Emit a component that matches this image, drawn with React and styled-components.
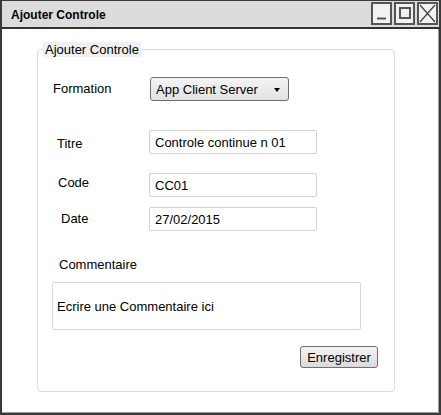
import React from 'react'
import styled, { createGlobalStyle } from 'styled-components'

const GlobalStyle = createGlobalStyle`
  html, body {
    margin: 0;
    padding: 0;
    background: #fff;
  }

  body {
    font-family: "Liberation Sans", Arial, sans-serif;
    font-size: 13px;
    color: #000;
  }
`

const Window = styled.div`
  box-sizing: border-box;
  width: 441px;
  height: 415px;
  display: flex;
  flex-direction: column;
  border: 2px solid #3a3a3a;
  border-top-width: 1px;
  background: #fff;
  box-shadow: inset -1px -1px 0 #9a9a9a;
`

const TitleBar = styled.div`
  display: flex;
  align-items: flex-start;
  height: 28px;
  padding-top: 1px;
  box-sizing: border-box;
  border-bottom: 2px solid #333;
  background: #dcdcdc;
`

const Title = styled.div`
  flex: 1;
  padding: 6px 0 0 9px;
  font-size: 12px;
  font-weight: bold;
  line-height: 14px;
`

const WinButtons = styled.div`
  display: flex;
  gap: 2px;
  margin-right: 1px;
`

const WinButton = styled.div`
  width: 21px;
  height: 23px;
  box-sizing: border-box;
  border: 2px solid #555;
  background: #f2f2f2;

  svg {
    display: block;
  }
`

const Body = styled.div`
  flex: 1;
  padding: 13px 0 0 35px;
`

const Group = styled.fieldset`
  box-sizing: border-box;
  width: 358px;
  margin: 0;
  padding: 0 16px 23px 0;
  border: 1px solid #d4dde6;
  border-radius: 4px;
`

const Legend = styled.legend`
  margin-left: 5px;
  padding: 0 2px;
  line-height: 15px;
  background: #f0f0f0;
`

const Row = styled.div`
  display: flex;
  align-items: flex-start;
  height: 24px;
  margin-top: ${({ top }) => top}px;
  padding-left: 15px;
`

const Label = styled.div`
  box-sizing: border-box;
  width: 96px;
  padding-top: ${({ dy }) => dy}px;
  padding-left: ${({ dx }) => dx}px;
  line-height: 15px;
`

const Select = styled.div`
  box-sizing: border-box;
  display: flex;
  align-items: center;
  justify-content: space-between;
  width: 139px;
  height: 24px;
  margin-left: 1px;
  padding: 1px 8px 0 5px;
  border: 1px solid #707070;
  border-radius: 3px;
  background: linear-gradient(#f4f4f4, #e2e2e2);
`

const Arrow = styled.span`
  width: 0;
  height: 0;
  border-left: 3px solid transparent;
  border-right: 3px solid transparent;
  border-top: 4px solid #000;
`

const TextInput = styled.input`
  box-sizing: border-box;
  width: 168px;
  height: 24px;
  margin: 0;
  padding: 1px 5px 0;
  border: 1px solid #d2d2d2;
  border-radius: 2px;
  font: inherit;
  color: #000;
  background: #fff;
  outline: none;
`

const FieldTitle = styled.div`
  margin-top: 26px;
  padding-left: 21px;
  line-height: 15px;
`

const Comment = styled.textarea`
  display: block;
  box-sizing: border-box;
  width: 309px;
  height: 48px;
  margin: 10px 0 0 14px;
  padding: 16px 4px 0;
  border: 1px solid #d6d9dc;
  border-radius: 2px;
  font: inherit;
  line-height: 15px;
  color: #000;
  resize: none;
  overflow: hidden;
  outline: none;
`

const Actions = styled.div`
  display: flex;
  justify-content: flex-end;
  margin-top: 16px;
`

const Button = styled.button`
  box-sizing: border-box;
  height: 22px;
  width: 78px;
  padding: 1px 0 0;
  border: 1px solid #707070;
  border-radius: 3px;
  font: inherit;
  color: #000;
  background: linear-gradient(#f4f4f4, #dadada);
`

const fields = [
  { label: 'Titre', value: 'Controle continue n 01', top: 29, dx: 4, dy: 6 },
  { label: 'Code', value: 'CC01', top: 19, dx: 5, dy: 2 },
  { label: 'Date', value: '27/02/2015', top: 10, dx: 8, dy: 4 }
]

function App () {
  return (
    <>
      <GlobalStyle />
      <Window>
        <TitleBar>
          <Title>Ajouter Controle</Title>
          <WinButtons>
            <WinButton>
              <svg width='17' height='19' viewBox='0 0 17 19'>
                <line x1='4' y1='14.5' x2='13' y2='14.5' stroke='#555' strokeWidth='2' />
              </svg>
            </WinButton>
            <WinButton>
              <svg width='17' height='19' viewBox='0 0 17 19'>
                <rect x='4' y='4' width='10' height='10' fill='none' stroke='#555' strokeWidth='2' />
              </svg>
            </WinButton>
            <WinButton>
              <svg width='17' height='19' viewBox='0 0 17 19'>
                <path d='M1 1 L16 18 M16 1 L1 18' stroke='#444' strokeWidth='1.3' fill='none' />
              </svg>
            </WinButton>
          </WinButtons>
        </TitleBar>

        <Body>
          <Group>
            <Legend>Ajouter Controle</Legend>

            <Row top={20}>
              <Label dx={0} dy={4}>Formation</Label>
              <Select>
                <span>App Client Server</span>
                <Arrow />
              </Select>
            </Row>

            {fields.map(f => (
              <Row key={f.label} top={f.top}>
                <Label dx={f.dx} dy={f.dy}>{f.label}</Label>
                <TextInput defaultValue={f.value} readOnly />
              </Row>
            ))}

            <FieldTitle>Commentaire</FieldTitle>
            <Comment defaultValue='Ecrire une Commentaire ici' readOnly />

            <Actions>
              <Button>Enregistrer</Button>
            </Actions>
          </Group>
        </Body>
      </Window>
    </>
  )
}

export default App
